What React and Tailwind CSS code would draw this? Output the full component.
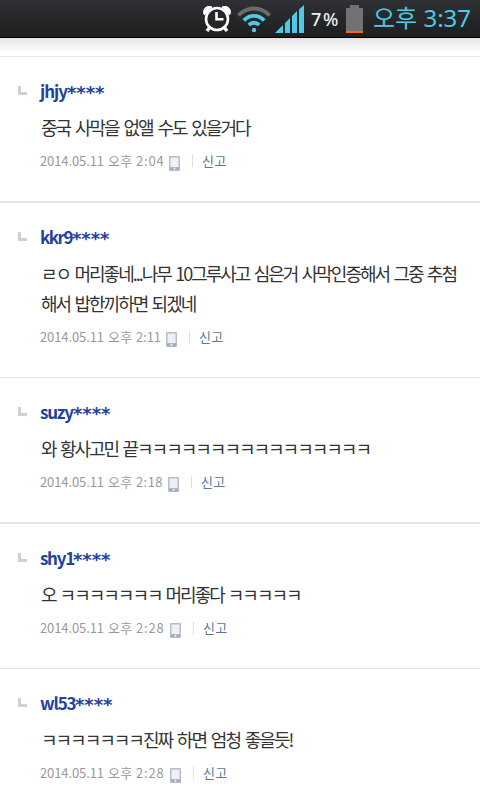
import React from "react";
import { clsx } from "clsx";

const comments = [
  {
    user: "jhjy",
    lines: ["중국 사막을 없앨 수도 있을거다"],
    time: "2:04",
    size: "h-[145px] border-t",
    nameFit: "w-[27px] tracking-[-1px]",
    textFit: "[word-spacing:2.8px]",
    timeFit: "w-[33px] tracking-[0.8px]",
  },
  {
    user: "kkr9",
    lines: ["ㄹㅇ 머리좋네...나무 10그루사고 심은거 사막인증해서 그중 추첨", "해서 밥한끼하면 되겠네"],
    time: "2:11",
    size: "h-[176px] border-t-2",
    nameFit: "w-[32px] tracking-[-1.5px]",
    textFit: "[word-spacing:2.3px]",
    timeFit: "w-[30px] tracking-[-0.1px]",
  },
  {
    user: "suzy",
    lines: ["와 황사고민 끝ㅋㅋㅋㅋㅋㅋㅋㅋㅋㅋㅋㅋㅋㅋㅋㅋ"],
    time: "2:18",
    size: "h-[145px] border-t",
    nameFit: "w-[33px] tracking-[-1.2px]",
    textFit: "[word-spacing:2.3px]",
    timeFit: "w-[32px] tracking-[0.4px]",
  },
  {
    user: "shy1",
    lines: ["오 ㅋㅋㅋㅋㅋㅋㅋ 머리좋다 ㅋㅋㅋㅋㅋ"],
    time: "2:28",
    size: "h-[146px] border-t-2",
    nameFit: "w-[33px] tracking-[-1.3px]",
    textFit: "[word-spacing:2px]",
    timeFit: "w-[34px] tracking-[0.8px]",
  },
  {
    user: "wl53",
    lines: ["ㅋㅋㅋㅋㅋㅋㅋ진짜 하면 엄청 좋을듯!"],
    time: "2:28",
    size: "h-[132px] border-t",
    nameFit: "w-[35px] tracking-[-1.2px]",
    textFit: "[word-spacing:2.8px]",
    timeFit: "w-[34px] tracking-[0.8px]",
  },
];

const AlarmIcon = () => (
  <svg className="w-7 h-7 shrink-0" viewBox="0 0 28 28" fill="none" stroke="#fff">
    <path d="M1 10 C-1 3 4 0 9 2 L2 10Z M27 10 C29 3 24 0 19 2 L26 10Z" fill="#fff" stroke="none" />
    <path d="M1.500 9 C0 4 4 1 9 2.500 M26.500 9 C28 4 24 1 19 2.500" strokeWidth="2" />
    <path d="M7 22 L4 26 M21 22 L24 26" strokeWidth="3.400" />
    <circle cx="14" cy="14" r="11" fill="#252729" strokeWidth="2.600" />
    <path d="M13.5 7 V14.2 H20.500" strokeWidth="2.600" />
  </svg>
);

const WifiIcon = () => (
  <svg className="w-[34px] h-7 shrink-0" viewBox="0 0 34 28" fill="none" stroke="#50c8e6" strokeWidth="3.800">
    <path d="M1.5 10.5 C10 1.2 24 1.2 32.500 10.500" stroke="#6b6b6b" />
    <path d="M6.800 15.500 C12.500 9.300 21.500 9.300 27.200 15.500" />
    <path d="M11.800 20 C14.800 17 19.200 17 22.200 20" />
    <circle cx="17" cy="25" r="2.200" fill="#50c8e6" stroke="none" />
  </svg>
);

const SignalIcon = () => (
  <svg className="w-[30px] h-7 shrink-0" viewBox="0 0 30 28" fill="#50c8e6">
    <path d="M0 28 L8 20 V28Z M10 18 L15 13 V28 H10Z M17 11 L22 6 V28 H17Z M24 4.500 L29 0 V28 H24Z" />
  </svg>
);

const BatteryIcon = () => (
  <svg className="w-[17px] h-7 shrink-0" viewBox="0 0 17 28">
    <path d="M4 0 H13 V3 H17 V26 H0 V3 H4Z" fill="#727272" />
    <path d="M0 26 H17 V28 H0Z" fill="#ff6a00" />
  </svg>
);

const PhoneIcon = () => (
  <svg className="w-[11px] h-[15px] shrink-0" viewBox="0 0 11 15">
    <rect width="11" height="15" rx="1" fill="#b7bdca" />
    <rect x="1.500" y="1.500" width="8" height="9.500" fill="#eef0f4" />
    <rect x="1" y="11.500" width="9" height="2.500" fill="#a5adbc" />
    <circle cx="5.500" cy="12.700" r="0.900" fill="#fff" />
  </svg>
);

const StatusBar = () => (
  <header className="h-[38px] flex items-start pl-[203px] pt-[5px] bg-linear-to-b from-[#2f3134] to-[#1d1e20] border-b border-black">
    <AlarmIcon />
    <div className="ml-[6px]"><WifiIcon /></div>
    <div className="ml-1"><SignalIcon /></div>
    <span className="w-[35px] ml-[6px] shrink-0 whitespace-nowrap text-[18px] leading-7 font-medium tracking-[1.6px] font-['Noto_Sans'] text-[#eee]">7%</span>
    <BatteryIcon />
    <span className="ml-[10px] -mt-px shrink-0 whitespace-nowrap text-[24px] leading-7 text-[#50c8e6] font-['Noto_Sans','Noto_Sans_CJK_KR',sans-serif]">
      오후 3:37
    </span>
  </header>
);

const Comment = ({ user, lines, time, size, nameFit, textFit, timeFit }) => (
  <li className={clsx("flex border-[#e4e4e4] pl-[18px] overflow-hidden", size)}>
    {/* Reply marker */}
    <svg className="w-[9px] h-[9px] mt-[29px] shrink-0" viewBox="0 0 9 9">
      <path d="M0 0 H3 V6 H9 V9 H0Z" fill="#d0d0d0" />
    </svg>
    <div className="ml-[13px] pt-[22px]">
      <h3 className="h-6 flex items-center whitespace-nowrap text-[17px] font-bold text-[#24429c]">
        <span className={clsx("shrink-0", nameFit)}>{user}</span>
        <span className="pt-[3px] text-[18px] leading-6 tracking-[-0.1px] font-['DejaVu_Sans']">****</span>
      </h3>
      <div className={clsx("mt-[9px] ml-px text-[18px] leading-[30px] tracking-[-2px] text-[#333]", textFit)}>
        {lines.map((line) => (
          <p key={line} className="whitespace-nowrap">{line}</p>
        ))}
      </div>
      <div className="mt-[9px] h-5 flex items-center text-[13px] leading-5 whitespace-nowrap text-[#999]">
        <span className="w-[68px] shrink-0 tracking-[-0.1px]">2014.05.11</span>
        <span className="w-[28px] shrink-0 tracking-[0.4px]">오후</span>
        <span className={clsx("shrink-0", timeFit)}>{time}</span>
        <div className="mt-[5px]"><PhoneIcon /></div>
        <span className="w-px h-3 ml-3 bg-[#ddd]" />
        <span className="ml-[9px] tracking-[0.3px] text-[#5b7896]">신고</span>
      </div>
    </div>
  </li>
);

export default function App() {
  return (
    <div className="w-[480px] h-[800px] overflow-hidden bg-white font-['Noto_Sans_CJK_KR',sans-serif]">
      <StatusBar />
      <div className="h-[18px] bg-linear-to-b from-[#e4e4e4] to-white to-80%" />
      <ul>
        {comments.map((c) => (
          <Comment key={c.user} {...c} />
        ))}
      </ul>
    </div>
  );
}
